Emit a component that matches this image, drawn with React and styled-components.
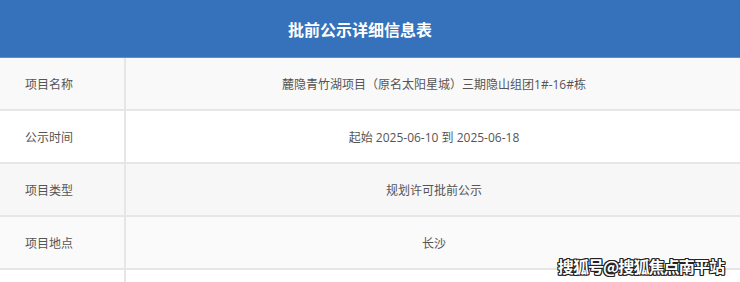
import React from "react";
import styled, { createGlobalStyle } from "styled-components";

const rows = [
	{ label: "项目名称", value: "麓隐青竹湖项目（原名太阳星城）三期隐山组团1#-16#栋", bg: "#f9f9f9" },
	{ label: "公示时间", value: "起始 2025-06-10 到 2025-06-18", bg: "#ffffff" },
	{ label: "项目类型", value: "规划许可批前公示", bg: "#f7f7f7" },
	{ label: "项目地点", value: "长沙", bg: "#fafafa" },
	{ label: "", value: "", bg: "#ffffff" },
];

const App = () => {
	return (
		<Page>
			<GlobalStyle />
			<Table>
				<Header>批前公示详细信息表</Header>
				{rows.map((row, i) => (
					<Row key={i} $bg={row.bg}>
						<Label>{row.label}</Label>
						<Value>{row.value}</Value>
					</Row>
				))}
			</Table>
			<Watermark>搜狐号@搜狐焦点南平站</Watermark>
		</Page>
	);
};

export default App;

const GlobalStyle = createGlobalStyle`
	html, body {
		margin: 0;
		padding: 0;
		background: #ffffff;
		overflow: hidden;
	}
`;

const Page = styled.div`
	position: relative;
	width: 740px;
	height: 282px;
	overflow: hidden;
	font-family: "Noto Sans CJK SC", "Noto Sans", sans-serif;
`;

const Table = styled.div`
	display: flex;
	flex-direction: column;
`;

const Header = styled.div`
	height: 57px;
	padding-right: 20px;
	border-bottom: 1px solid #5a8fd0;
	background: #3572bb;
	color: #ffffff;
	font-size: 16px;
	font-weight: 700;
	display: flex;
	align-items: center;
	justify-content: center;
`;

const Row = styled.div`
	display: grid;
	grid-template-columns: 126px 1fr;
	height: 51px;
	flex-shrink: 0;
	border-bottom: 2px solid #e6e6e6;
	background: ${(p) => p.$bg};
	color: #555555;
	font-size: 12px;
`;

const Label = styled.div`
	display: flex;
	align-items: center;
	padding-left: 25px;
	border-right: 2px solid #e6e6e6;
`;

const Value = styled.div`
	display: flex;
	align-items: center;
	justify-content: center;
	padding-left: 2px;
	font-family: "Open Sans", "Noto Sans CJK SC", sans-serif;
`;

const Watermark = styled.div`
	position: absolute;
	right: 16px;
	bottom: 4px;
	font-size: 16px;
	font-weight: 700;
	color: #ffffff;
	letter-spacing: -0.9px;
	text-shadow: 1px 1px 0 #222, -1px -1px 0 #222, 1px -1px 0 #222, -1px 1px 0 #222,
		1px 0 0 #222, -1px 0 0 #222, 0 1px 0 #222, 0 -1px 0 #222;
`;
